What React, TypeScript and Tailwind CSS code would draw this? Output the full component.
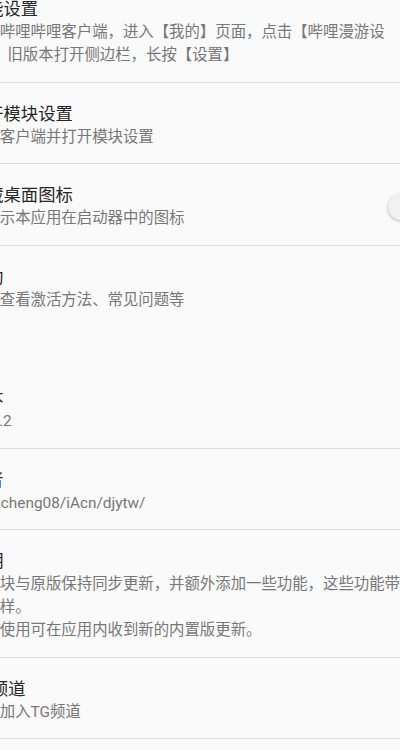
import { Fragment } from "react";

interface PrefProps {
    title: string,
    summary: string,
    toggle?: boolean,
    divider?: boolean
}

const prefs: PrefProps[] = [
    { title: "功能设置", summary: "打开哔哩哔哩客户端，进入【我的】页面，点击【哔哩漫游设置】；旧版本打开侧边栏，长按【设置】" },
    { title: "打开模块设置", summary: "打开客户端并打开模块设置" },
    { title: "隐藏桌面图标", summary: "不显示本应用在启动器中的图标", toggle: true },
    { title: "帮助", summary: "点击查看激活方法、常见问题等", divider: false },
];

const about: PrefProps[] = [
    { title: "版本", summary: "1.12.2" },
    { title: "作者", summary: "yujincheng08/iAcn/djytw/" },
    { title: "说明", summary: "本模块与原版保持同步更新，并额外添加一些功能，这些功能带来花样。\n继续使用可在应用内收到新的内置版更新。" },
    { title: "TG频道", summary: "点击加入TG频道" },
];

function Pref({ title, summary, toggle, divider = true }: PrefProps) {
    return (
        <div className={`flex items-center pt-[20px] pb-[15px] pr-[21px] ${divider ? "border-b border-[#dcdcdc]" : ""}`}>
            <div className="flex-1 min-w-0">
                <div className="text-[17.3px] leading-[23px] text-[#262626]">{title}</div>
                <div className="text-[15.4px] leading-[22.75px] text-[#777777] whitespace-pre-line">{summary}</div>
            </div>
            {toggle && (
                <div className="relative w-[40px] h-[26px] shrink-0 -mr-[20px] ml-2">
                    <div className="absolute left-[10px] right-0 top-[6px] h-[14px] rounded-full bg-[#c4c4c4]" />
                    <div className="absolute left-0 top-0 w-[26px] h-[26px] rounded-full bg-[#f1f1f1] shadow-[0_1px_3px_rgba(0,0,0,0.3)]" />
                </div>
            )}
        </div>
    )
}

export default function App() {
    return (
        <div lang="zh-CN" className="w-[400px] h-[750px] overflow-hidden bg-[#fafafa]" style={{ fontFamily: 'Roboto, "Noto Sans CJK SC", sans-serif' }}>
            <div className="-mt-[22px] -ml-[31px] w-[460px]">
                {prefs.map((p) => (
                    <Fragment key={p.title}><Pref {...p} /></Fragment>
                ))}
                <div className="h-10 flex items-end pb-2 text-[14px] text-[#fb7299]">关于</div>
                {about.map((p) => (
                    <Fragment key={p.title}><Pref {...p} /></Fragment>
                ))}
                <div className="h-20" />
            </div>
        </div>
    )
}
